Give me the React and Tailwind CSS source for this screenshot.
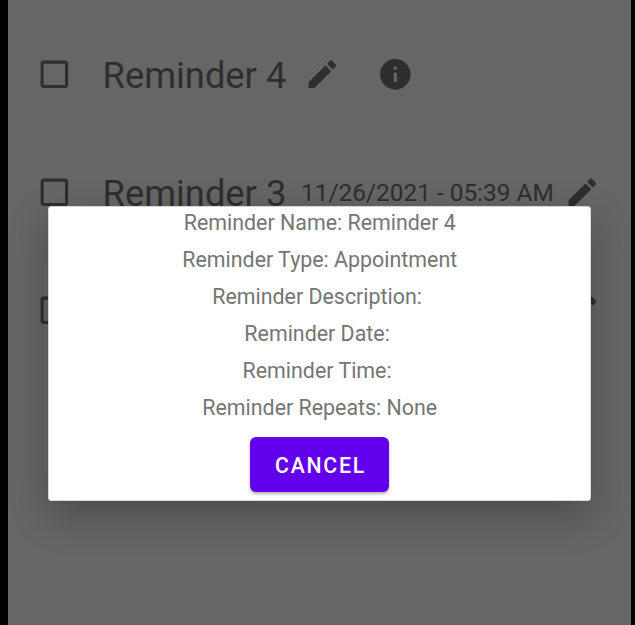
const ICONS = {
  checkbox:
    "M19 5v14H5V5h14m0-2H5c-1.1 0-2 .9-2 2v14c0 1.1.9 2 2 2h14c1.1 0 2-.9 2-2V5c0-1.1-.9-2-2-2z",
  edit: "M3 17.25V21h3.75L17.81 9.94l-3.75-3.75L3 17.25zM20.71 7.04c.39-.39.39-1.02 0-1.41l-2.34-2.34c-.39-.39-1.02-.39-1.41 0l-1.83 1.83 3.75 3.75 1.83-1.83z",
  info: "M12 2C6.48 2 2 6.48 2 12s4.48 10 10 10 10-4.48 10-10S17.52 2 12 2zm1 15h-2v-6h2v6zm0-8h-2V7h2v2z",
};

function Icon({ name, className = "" }) {
  return (
    <svg viewBox="0 0 24 24" fill="currentColor" className={`size-[36.7px] shrink-0 ${className}`}>
      <path d={ICONS[name]} />
    </svg>
  );
}

function ReminderRow({ title, date, dated }) {
  return (
    <div className="flex h-[117.8px] items-center pl-[28px]">
      <Icon name="checkbox" />
      <span className="ml-[29.9px] w-[186px] shrink-0 pt-[2px] text-[36.3px] leading-[43px]">{title}</span>
      {dated && (
        <span className="ml-[12.5px] w-[257px] shrink-0 whitespace-nowrap pt-[1px] text-[24.4px] leading-[29px]">
          {date}
        </span>
      )}
      <Icon name="edit" className={dated ? "ml-[6.4px]" : "ml-[15.4px]"} />
      <Icon name="info" className="ml-[36.4px]" />
    </div>
  );
}

const DETAILS = [
  "Reminder Name: Reminder 4",
  "Reminder Type: Appointment",
  "Reminder Description: ",
  "Reminder Date: ",
  "Reminder Time: ",
  "Reminder Repeats: None",
];

export default function App() {
  return (
    <div className="h-[625px] w-[635px] overflow-hidden bg-black pl-[8px] pr-[4px] font-[Roboto,sans-serif]">
      <div className="relative h-full overflow-hidden bg-[#666666] pt-[15.6px] text-[#2e2e2e]">
        <ReminderRow title="Reminder 4" />
        <ReminderRow title="Reminder 3" date="11/26/2021 - 05:39 AM" dated />
        <ReminderRow dated />

        <div
          role="dialog"
          className="absolute left-[40px] top-[206px] flex h-[295px] w-[543px] flex-col items-center rounded-[3px] border border-[#d8d8d8] bg-white text-[21.4px] text-[#757575] shadow-[0_14px_38px_rgba(0,0,0,0.27)]"
        >
          {DETAILS.map((line) => (
            <p key={line} className="h-[37px] whitespace-pre pl-[0.5px] leading-[31px]">
              {line}
            </p>
          ))}
          <button className="mt-[8px] h-[55px] w-[139px] rounded-[6px] bg-[#6200ee] pl-[2px] pt-[2px] text-[21.2px] font-medium tracking-[1.8px] text-white shadow-[0_2px_3px_rgba(0,0,0,0.3)]">
            CANCEL
          </button>
        </div>
      </div>
    </div>
  );
}
